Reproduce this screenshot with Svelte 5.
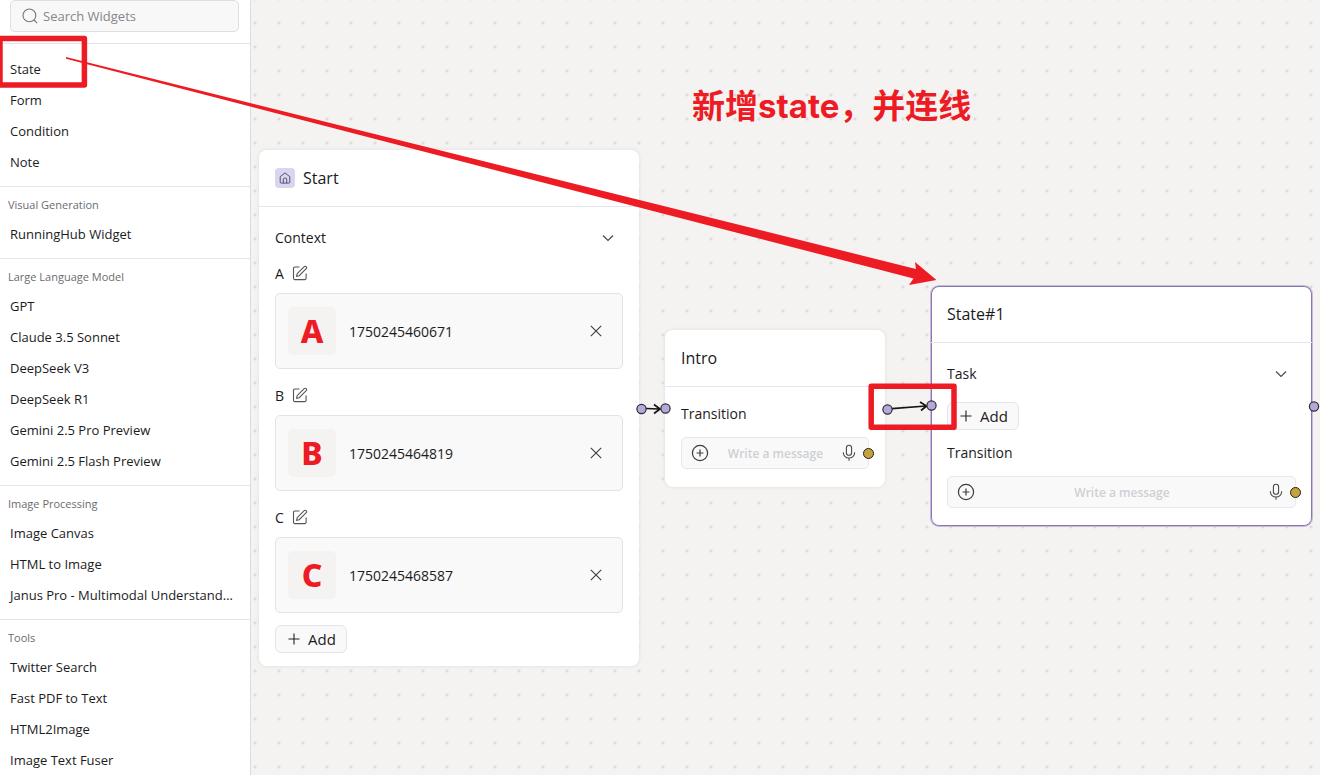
<script>
  const sections = [
    { title: '', items: ['State', 'Form', 'Condition', 'Note'] },
    { title: 'Visual Generation', items: ['RunningHub Widget'] },
    {
      title: 'Large Language Model',
      items: ['GPT', 'Claude 3.5 Sonnet', 'DeepSeek V3', 'DeepSeek R1', 'Gemini 2.5 Pro Preview', 'Gemini 2.5 Flash Preview']
    },
    { title: 'Image Processing', items: ['Image Canvas', 'HTML to Image', 'Janus Pro - Multimodal Understanding'] },
    { title: 'Tools', items: ['Twitter Search', 'Fast PDF to Text', 'HTML2Image', 'Image Text Fuser'] }
  ];
  const files = [
    { key: 'A', name: '1750245460671' },
    { key: 'B', name: '1750245464819' },
    { key: 'C', name: '1750245468587' }
  ];
</script>

{#snippet chevron()}
  <svg width="16" height="16" viewBox="0 0 16 16" fill="none" stroke="#4a4a4a" stroke-width="1.2"><path d="M3 5.500 8 10.500 13 5.500" /></svg>
{/snippet}

{#snippet addButton()}
  <button class="add" type="button">
    <svg width="12" height="12" viewBox="0 0 12 12" stroke="#222" stroke-width="1.1"><path d="M6 .5v11M.5 6h11" /></svg>
    Add
  </button>
{/snippet}

{#snippet message(id)}
  <div class="message">
    <button class="icon" type="button" aria-label="Insert">
      <svg width="18" height="18" viewBox="0 0 18 18" fill="none" stroke="#3c3c3c" stroke-width="1.2"><circle cx="9" cy="9" r="7.6" /><path d="M9 5.6v6.8M5.6 9h6.8" /></svg>
    </button>
    <input {id} type="text" placeholder="Write a message" aria-label="Transition message" />
    <button class="icon" type="button" aria-label="Dictate">
      <svg width="14" height="18" viewBox="0 0 14 18" fill="none" stroke="#4a4a4a" stroke-width="1.1"><rect x="4.4" y="1.3" width="5.2" height="10" rx="2.6" /><path d="M1.4 8.3v.7a5.6 5 0 0 0 11.2 0v-.7M7 14v2.8" /></svg>
    </button>
    <span class="port gold"></span>
  </div>
{/snippet}

<div class="app">
  <aside>
    <div class="search">
      <label>
        <svg width="16" height="16" viewBox="0 0 16 16" fill="none" stroke="#777" stroke-width="1.1"><circle cx="7.4" cy="7.4" r="6.4" /><path d="m12 12 3.2 3.2" /></svg>
        <input type="search" placeholder="Search Widgets" aria-label="Search Widgets" />
      </label>
    </div>
    {#each sections as section}
      <section class:untitled={!section.title}>
        {#if section.title}<h2>{section.title}</h2>{/if}
        <ul>
          {#each section.items as item}<li>{item}</li>{/each}
        </ul>
      </section>
    {/each}
  </aside>

  <main>
    <article class="node start">
      <header>
        <span class="home">
          <svg width="12" height="12" viewBox="0 0 12 12" fill="none" stroke="#55506a" stroke-width="1"><path d="M1.2 4.7 6 .9l4.8 3.8v5.4a1 1 0 0 1-1 1H2.2a1 1 0 0 1-1-1zM4.300 11V7.200a1 1 0 0 1 1-1h1.400a1 1 0 0 1 1 1V11" /></svg>
        </span>
        <h3>Start</h3>
      </header>
      <div class="body">
        <div class="row"><h4>Context</h4><button class="icon" type="button" aria-label="Collapse context">{@render chevron()}</button></div>
        {#each files as file}
          <div class="field">
            <div class="name">
              {file.key}
              <button class="icon" type="button" aria-label="Rename {file.key}">
                <svg width="16" height="16" viewBox="0 0 16 16" fill="none" stroke="#555" stroke-width="1.1"><path d="M7.5 2H2.8A1.3 1.3 0 0 0 1.5 3.3v10a1.3 1.3 0 0 0 1.3 1.3h10a1.3 1.3 0 0 0 1.3-1.3V8.5M5.200 8.700l7-7a1.300 1.300 0 0 1 2 0 1.300 1.300 0 0 1 0 2l-7 7-2.600.600z" /></svg>
              </button>
            </div>
            <div class="file">
              <span class="thumb">{file.key}</span>
              <span class="filename">{file.name}</span>
              <button class="icon" type="button" aria-label="Remove {file.name}">
                <svg width="14" height="14" viewBox="0 0 14 14" stroke="#3c3c3c" stroke-width="1.1"><path d="m1.8 1.8 10.4 10.4M12.2 1.8 1.8 12.2" /></svg>
              </button>
            </div>
          </div>
        {/each}
        {@render addButton()}
      </div>
    </article>

    <article class="node intro">
      <header><h3>Intro</h3></header>
      <div class="body">
        <h4>Transition</h4>
        {@render message('intro-message')}
      </div>
    </article>

    <article class="node state">
      <header><h3>State#1</h3></header>
      <div class="body">
        <div class="row"><h4>Task</h4><button class="icon" type="button" aria-label="Collapse task">{@render chevron()}</button></div>
        {@render addButton()}
        <h4>Transition</h4>
        {@render message('state-message')}
      </div>
    </article>

    <p class="callout" lang="zh-CN">新增state，并连线</p>
  </main>

  <svg class="overlay" aria-hidden="true">
    <g fill="none" stroke="#151515" stroke-width="1.7">
      <path d="M646 408.5 659 409M654 404.5l6 4.5-6 4.5" />
      <path d="M892 408.7 926 406M920 402l6.5 4-5.5 4.5" />
    </g>
    <g fill="#b5a9da" stroke="#2d2b33" stroke-width="1.2">
      <circle cx="641.5" cy="409" r="4.6" />
      <circle cx="665.5" cy="408.5" r="4.6" />
      <circle cx="887.5" cy="409.5" r="4.6" />
      <circle cx="931.5" cy="405.5" r="4.6" />
      <circle cx="1314" cy="406.5" r="4.6" />
    </g>
    <g fill="none" stroke="#ed1c24" stroke-width="5.5" stroke-linejoin="round">
      <rect x="0" y="38.4" width="84.4" height="46.6" />
      <rect x="871.2" y="386.2" width="82.8" height="41" />
    </g>
    <path fill="#ed1c24" d="M66 57 916 269 915 262 936.5 280 909 285 913.5 278.5 66 58.8z" />
  </svg>
</div>

<style>
  :global(body) { margin: 0; }
  .app {
    position: relative;
    display: flex;
    height: 100vh;
    overflow: hidden;
    font-family: "Open Sans", "Noto Sans", "Noto Sans CJK SC", sans-serif;
    color: #1b1b1d;
  }
  h2, h3, h4, p, ul { margin: 0; padding: 0; font-weight: 400; }
  ul { list-style: none; }
  button, input { font: inherit; color: inherit; }
  svg { display: block; }
  .icon { display: flex; padding: 0; border: 0; background: none; }

  aside {
    flex: 0 0 250px;
    min-width: 0;
    overflow: hidden;
    background: #fff;
    border-right: 1px solid #dcdcde;
  }
  .search { padding: 0 11px 11px 10px; }
  .search label {
    display: flex;
    align-items: center;
    gap: 5px;
    height: 30px;
    padding: 0 11px;
    border: 1px solid #dfdfe1;
    border-radius: 5px;
    background: #f8f8f8;
  }
  .search input {
    flex: 1;
    min-width: 0;
    padding: 0;
    border: 0;
    outline: 0;
    background: none;
    font-size: 13px;
  }
  .search input::placeholder { color: #86868a; opacity: 1; }
  section { border-top: 1px solid #e4e5ec; padding-bottom: 8px; }
  .untitled { padding: 10px 0 8px; }
  h2 { padding: 8px 8px 4px; font-size: 11px; line-height: 20px; color: #6c6c70; }
  li {
    padding: 0 14px 0 10px;
    font-size: 13px;
    line-height: 31px;
    white-space: nowrap;
    overflow: hidden;
    text-overflow: ellipsis;
  }

  main {
    position: relative;
    flex: 1;
    background-color: #f4f3f1;
    background-image: radial-gradient(circle at center, #dddcda 1px, #f4f3f1 2px);
    background-size: 24px 24px;
    background-position: -8px 11px;
  }
  .node {
    position: absolute;
    box-sizing: border-box;
    border-radius: 8px;
    background: #fff;
    box-shadow: 0 0 3px 1px #e6e5e3;
  }
  .start { left: 8px; top: 150px; width: 380px; }
  .intro { left: 414px; top: 330px; width: 220px; }
  .state { left: 680px; top: 286px; width: 381px; box-shadow: inset 0 0 0 1px #8c76b0, 0 0 0 1px #c6bcd8; }
  .node header {
    display: flex;
    align-items: center;
    gap: 8px;
    height: 56px;
    padding: 0 16px;
    border-bottom: 1px solid #e2e6f0;
  }
  h3 { font-size: 16px; line-height: 24px; }
  h4 { font-size: 14px; line-height: 22px; }
  .home {
    display: grid;
    place-items: center;
    width: 20px;
    height: 20px;
    border-radius: 4px;
    background: #d9d4f0;
  }
  .body { padding: 16px 16px 18px; }
  .start .body { padding-bottom: 13px; }
  .row { display: flex; align-items: center; justify-content: space-between; height: 30px; padding-right: 7px; }
  .field { padding-bottom: 14px; }
  .row + .field { padding-top: 8px; }
  .field:nth-last-child(2) { padding-bottom: 12px; }
  .name { display: flex; align-items: center; gap: 8px; height: 24px; font-size: 14px; }
  .file {
    display: flex;
    align-items: center;
    box-sizing: border-box;
    height: 76px;
    margin-top: 8px;
    padding: 0 19px 0 12px;
    border: 1px solid #e3e3e5;
    border-radius: 5px;
    background: #f9f9f9;
  }
  .thumb {
    display: grid;
    place-items: center;
    width: 48px;
    height: 48px;
    border-radius: 5px;
    background: #f4f3f2;
    color: #ed1c24;
    font-family: "Noto Sans", "Open Sans", sans-serif;
    font-size: 32px;
    font-weight: 800;
    line-height: 32px;
  }
  .filename { flex: 1; margin-left: 13px; font-size: 14px; }
  .add {
    display: flex;
    align-items: center;
    gap: 8px;
    height: 28px;
    padding: 0 10px 0 12px;
    border: 1px solid #e3e5ea;
    border-radius: 6px;
    background: #f9f9f9;
    font-size: 15px;
  }
  .message {
    position: relative;
    display: flex;
    align-items: center;
    box-sizing: border-box;
    height: 32px;
    margin-top: 12px;
    padding: 0 12px 0 9px;
    border: 1px solid #e4e7ef;
    border-radius: 5px;
    background: #f9f9f9;
  }
  .message input {
    flex: 1;
    min-width: 0;
    padding: 0;
    border: 0;
    outline: 0;
    background: none;
    text-align: center;
    font-size: 12px;
    font-weight: 600;
  }
  .message input::placeholder { color: #cdd0d4; opacity: 1; }
  .state .add { margin: 13px 0 12px; }
  .port {
    position: absolute;
    right: -6px;
    top: 10px;
    box-sizing: border-box;
    width: 11px;
    height: 11px;
    border: 1px solid #25231c;
    border-radius: 50%;
  }
  .gold { background: #c3a23f; }
  .callout {
    position: absolute;
    left: 441px;
    top: 82px;
    font-family: Inter, "Noto Sans CJK SC", sans-serif;
    font-size: 33px;
    font-weight: 700;
    line-height: 48px;
    white-space: nowrap;
    color: #ed1c24;
  }
  .overlay { position: absolute; inset: 0; width: 100%; height: 100%; pointer-events: none; }
</style>
